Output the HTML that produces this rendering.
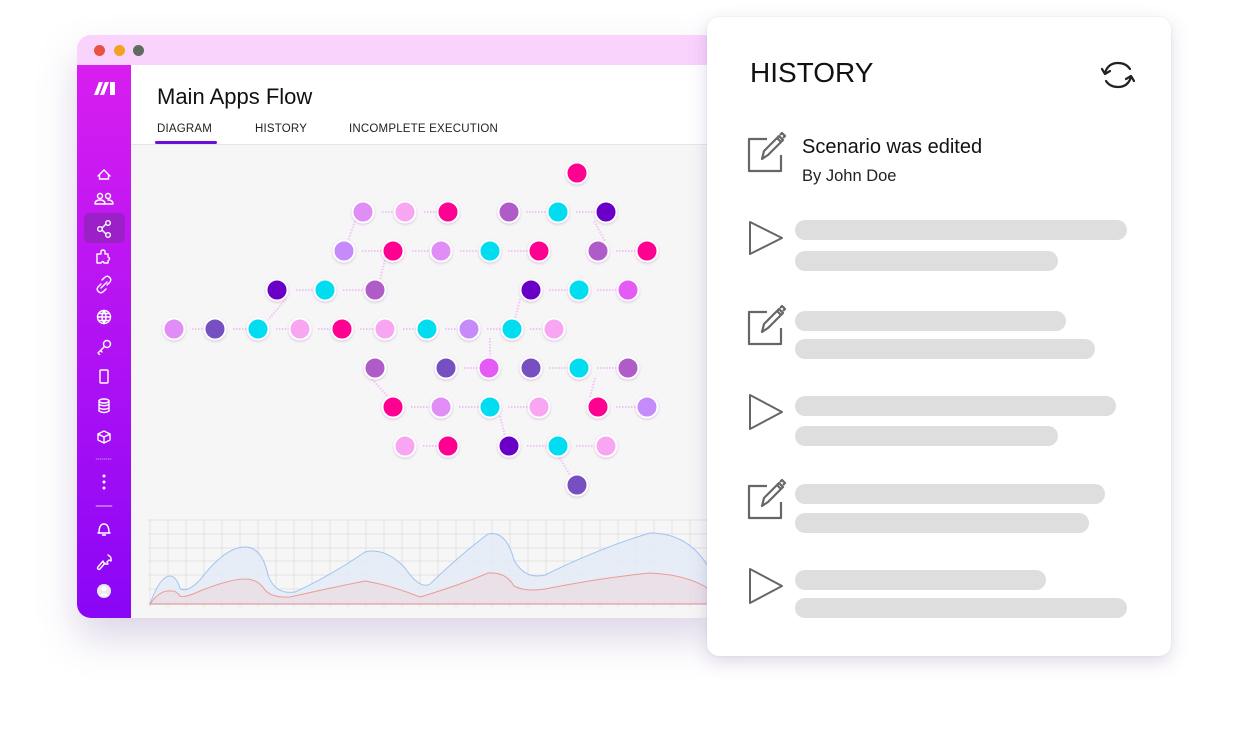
<!DOCTYPE html>
<html><head><meta charset="utf-8"><style>
*{margin:0;padding:0;box-sizing:border-box}
body{width:1250px;height:741px;background:#fff;position:relative;overflow:hidden;font-family:"Liberation Sans",sans-serif}
.win{position:absolute;left:77px;top:35px;width:640px;height:583px;border-radius:14px;overflow:hidden;background:#f6f6f6;box-shadow:0 20px 40px rgba(120,90,160,.25)}
.tb{position:absolute;left:0;top:0;width:100%;height:30px;background:#f9d3fb}
.dot{position:absolute;top:10px;width:11px;height:11px;border-radius:50%}
.side{position:absolute;left:0;top:30px;width:54px;height:553px;background:linear-gradient(#d81ef0,#8a06f6)}
.hdr{position:absolute;left:54px;top:30px;right:0;height:80px;background:#fff;border-bottom:1px solid #e6e6e6}
.panel{position:absolute;left:707px;top:17px;width:464px;height:639px;background:#fff;border-radius:12px;box-shadow:0 6px 18px rgba(110,80,150,.22),0 0 2px rgba(0,0,0,.08)}
.bar{position:absolute;left:88px;height:20px;border-radius:10px;background:#dedede}
</style></head><body>
<div class="win">
 <div class="tb"><div class="dot" style="left:17px;background:#e9523f"></div><div class="dot" style="left:37px;background:#f3a11f"></div><div class="dot" style="left:56px;background:#5f6a60"></div></div>
 <div class="side">
  <svg width="54" height="553" viewBox="0 0 54 553" fill="none" stroke="#fff" stroke-width="1.4" stroke-linecap="round" stroke-linejoin="round">
   <g fill="#fff" stroke="none"><polygon points="17,30 22,17 26,17 21,30"/><polygon points="23,30 28,17 32,17 27,30"/><polygon points="33,17 38,17 38,30 33,30"/></g>
   <path d="M21,111 L27,105 L33,111 M22.5,110 V114 H31.5 V110"/>
   <circle cx="23" cy="131" r="2.5"/><circle cx="31" cy="131" r="2.5"/><path d="M18,139 Q18,135 23,135 Q28,135 28,139 Z M29,139 H36 Q36,135 31,135"/>
   <rect x="7" y="148" width="41" height="30" rx="5" fill="#9b20c8" stroke="none"/>
   <circle cx="31" cy="158" r="2.3"/><circle cx="23" cy="164" r="2.3"/><circle cx="31" cy="170" r="2.3"/><path d="M25,163 L29,159 M25,165 L29,169"/>
   <path d="M20,196 V189 H24 V186 Q26,184 28,186 V189 H31 V192 Q34,193 31,196 V198 H27 Q26,195 24,198 H20 Z"/>
   <path d="M24,219 L21,222 Q19,225 22,227 Q24,229 27,226 L29,224 M30,220 L33,217 Q35,214 32,212 Q30,210 27,213 L25,215 M24,223 L30,217"/>
   <circle cx="27" cy="252" r="6.5"/><path d="M20.5,252 H33.5 M27,245.5 Q23,252 27,258.5 Q31,252 27,245.5 M21.5,248.5 H32.5 M21.5,255.5 H32.5"/>
   <circle cx="30" cy="279" r="3.5"/><path d="M27.5,281.5 L21,288 L22.5,289.5 M23.5,285.5 L25,287"/>
   <rect x="23" y="305" width="8" height="13" rx="1"/>
   <ellipse cx="27" cy="336" rx="5" ry="2"/><path d="M22,336 V346 Q27,349 32,346 V336 M22,339.5 Q27,342 32,339.5 M22,343 Q27,345.5 32,343"/>
   <path d="M27,366 L33,369 V375 L27,378 L21,375 V369 Z M21,369 L27,372 L33,369 M27,372 V378"/>
   <path d="M19,394 H35" stroke-dasharray="1 1" stroke-width=".6"/>
   <g fill="#fff" stroke="none"><circle cx="27" cy="411" r="1.5"/><circle cx="27" cy="417" r="1.5"/><circle cx="27" cy="423" r="1.5"/></g>
   <path d="M19,441 H35" stroke-width=".7"/>
   <path d="M22,468 Q22,459 27,459 Q32,459 32,468 H33 H21 H22 M25.5,470 H28.5"/>
   <path d="M31,490 Q35,492 34,496 L32,495 L30,497 L31,499 Q27,500 26,496 L21,502 Q20,503 21,504 Q22,505 23,504 L28,498"/>
   <circle cx="27" cy="526" r="7" fill="#e8e8ee" stroke="none"/><circle cx="27" cy="524" r="2.6" fill="#fff" stroke="none"/><path d="M22,531 Q27,525 32,531" fill="#fff" stroke="none"/>
  </svg>
 </div>
 <div class="hdr">
  <div style="position:absolute;left:26px;top:19px;font-size:22px;color:#111">Main Apps Flow</div>
  <div style="position:absolute;left:26px;top:58px;font-size:11.5px;color:#222;letter-spacing:.2px">DIAGRAM</div>
  <div style="position:absolute;left:124px;top:58px;font-size:11.5px;color:#222;letter-spacing:.2px">HISTORY</div>
  <div style="position:absolute;left:218px;top:58px;font-size:11.5px;color:#222;letter-spacing:.2px">INCOMPLETE EXECUTION</div>
  <div style="position:absolute;left:24px;top:76px;width:62px;height:3px;background:#6c0fd8;border-radius:2px"></div>
 </div>
</div>
<svg style="position:absolute;left:0;top:0" width="710" height="620">
 <defs><filter id="sh"><feDropShadow dx="0" dy="1" stdDeviation="1.2" flood-color="#a060c0" flood-opacity=".35"/></filter></defs>
 <g stroke="#f2c4f6" stroke-width="2" stroke-dasharray="1.5 1.5">
  <path d="M382,212H395 M424,212H438 M526,212H548 M576,212H596 M362,251H383 M412,251H431 M460,251H480 M508,251H529 M616,251H637 M296,290H315 M343,290H365 M549,290H569 M597,290H618 M192,329H205 M233,329H248 M276,329H290 M318,329H332 M360,329H375 M403,329H417 M445,329H459 M487,329H502 M530,329H544 M464,368H479 M549,368H569 M597,368H618 M411,407H431 M459,407H480 M508,407H529 M616,407H637 M423,446H438 M527,446H548 M576,446H596 M355,221L348,241 M385,260L380,280 M286,299L268,320 M520,299L515,320 M370,377L388,397 M594,221L605,241 M490,338L490,358 M500,416L505,436 M595,378L590,397 M558,455L570,475"/>
 </g>
 <g stroke="#fff" stroke-width="2" filter="url(#sh)">
  <circle cx="577" cy="173" r="10.5" fill="#ff0091"/>
  <circle cx="363" cy="212" r="10.5" fill="#e08ef5"/><circle cx="405" cy="212" r="10.5" fill="#f9a6f2"/><circle cx="448" cy="212" r="10.5" fill="#ff0091"/><circle cx="509" cy="212" r="10.5" fill="#b05cc8"/><circle cx="558" cy="212" r="10.5" fill="#00dcf0"/><circle cx="606" cy="212" r="10.5" fill="#6a00c8"/>
  <circle cx="344" cy="251" r="10.5" fill="#c68bfa"/><circle cx="393" cy="251" r="10.5" fill="#ff0091"/><circle cx="441" cy="251" r="10.5" fill="#e08ef5"/><circle cx="490" cy="251" r="10.5" fill="#00dcf0"/><circle cx="539" cy="251" r="10.5" fill="#ff0091"/><circle cx="598" cy="251" r="10.5" fill="#b05cc8"/><circle cx="647" cy="251" r="10.5" fill="#ff0091"/>
  <circle cx="277" cy="290" r="10.5" fill="#6a00c8"/><circle cx="325" cy="290" r="10.5" fill="#00dcf0"/><circle cx="375" cy="290" r="10.5" fill="#b05cc8"/><circle cx="531" cy="290" r="10.5" fill="#6a00c8"/><circle cx="579" cy="290" r="10.5" fill="#00dcf0"/><circle cx="628" cy="290" r="10.5" fill="#e55af5"/>
  <circle cx="174" cy="329" r="10.5" fill="#e08ef5"/><circle cx="215" cy="329" r="10.5" fill="#7650c0"/><circle cx="258" cy="329" r="10.5" fill="#00dcf0"/><circle cx="300" cy="329" r="10.5" fill="#f9a6f2"/><circle cx="342" cy="329" r="10.5" fill="#ff0091"/><circle cx="385" cy="329" r="10.5" fill="#f9a6f2"/><circle cx="427" cy="329" r="10.5" fill="#00dcf0"/><circle cx="469" cy="329" r="10.5" fill="#c68bfa"/><circle cx="512" cy="329" r="10.5" fill="#00dcf0"/><circle cx="554" cy="329" r="10.5" fill="#f9a6f2"/>
  <circle cx="375" cy="368" r="10.5" fill="#b05cc8"/><circle cx="446" cy="368" r="10.5" fill="#7650c0"/><circle cx="489" cy="368" r="10.5" fill="#e55af5"/><circle cx="531" cy="368" r="10.5" fill="#7650c0"/><circle cx="579" cy="368" r="10.5" fill="#00dcf0"/><circle cx="628" cy="368" r="10.5" fill="#b05cc8"/>
  <circle cx="393" cy="407" r="10.5" fill="#ff0091"/><circle cx="441" cy="407" r="10.5" fill="#e08ef5"/><circle cx="490" cy="407" r="10.5" fill="#00dcf0"/><circle cx="539" cy="407" r="10.5" fill="#f9a6f2"/><circle cx="598" cy="407" r="10.5" fill="#ff0091"/><circle cx="647" cy="407" r="10.5" fill="#c68bfa"/>
  <circle cx="405" cy="446" r="10.5" fill="#f9a6f2"/><circle cx="448" cy="446" r="10.5" fill="#ff0091"/><circle cx="509" cy="446" r="10.5" fill="#6a00c8"/><circle cx="558" cy="446" r="10.5" fill="#00dcf0"/><circle cx="606" cy="446" r="10.5" fill="#f9a6f2"/>
  <circle cx="577" cy="485" r="10.5" fill="#7650c0"/>
 </g>
 <g stroke="#dcdcdc" stroke-width=".7">
  <path d="M148,520H710 M148,534H710 M148,548H710 M148,561H710 M148,575H710 M148,589H710 M148,603H710"/>
  <path d="M150,520V607 M168,520V607 M186,520V607 M204,520V607 M222,520V607 M240,520V607 M258,520V607 M276,520V607 M294,520V607 M312,520V607 M330,520V607 M348,520V607 M366,520V607 M384,520V607 M402,520V607 M420,520V607 M438,520V607 M456,520V607 M474,520V607 M492,520V607 M510,520V607 M528,520V607 M546,520V607 M564,520V607 M582,520V607 M600,520V607 M618,520V607 M636,520V607 M654,520V607 M672,520V607 M690,520V607 M708,520V607"/>
 </g>
 <path d="M150,604 Q160,576 170,576 Q176,576 180,588 Q186,594 200,580 Q225,547 245,547 Q262,547 268,575 Q275,595 295,592 Q330,576 365,552 Q385,547 405,568 Q420,590 430,584 Q460,555 488,534 Q506,530 514,560 Q525,580 545,575 Q600,548 650,533 Q690,533 710,570 V604 Z" fill="#e4ecf8" opacity=".8" stroke="#8ab8f0" stroke-width="1"/>
 <path d="M150,604 Q160,590 170,591 Q176,590 180,596 Q185,598 200,591 Q230,579 245,579 Q258,579 265,590 Q272,598 290,597 Q330,588 365,581 Q390,585 420,597 Q460,585 488,573 Q506,572 514,586 Q525,592 545,589 Q600,578 650,573 Q690,575 710,590 V604 Z" fill="#ecdbe2" opacity=".7" stroke="#f07a6a" stroke-width="1"/>
</svg>
<div class="panel">
 <div style="position:absolute;left:43px;top:40px;font-size:28px;color:#111">HISTORY</div>
 <svg style="position:absolute;left:393px;top:41px" width="36" height="34" viewBox="0 0 36 34" fill="none" stroke="#222" stroke-width="2.2" stroke-linecap="round" stroke-linejoin="round">
  <path d="M5,15 Q8,5 18,5 Q26,5 30,11 M31,19 Q28,29 18,29 Q10,29 6,23"/><path d="M2,11 L5,16 L10,13 M34,23 L31,18 L26,21"/>
 </svg>
 <svg style="position:absolute;left:40px;top:113px" width="42" height="260" viewBox="0 0 42 260" fill="none" stroke="#666" stroke-width="2.2" stroke-linejoin="round">
  <path d="M20,9 H2 V41 H34 V25"/><path d="M15,29 L17,21 L32,6 L36,10 L21,25 Z M30,8 L34,12 M33,5 L35,3 L38,6 L36,8"/>
  <path d="M3,92 L35,108 L3,124 Z" stroke-width="2"/>
 </svg>
 <svg style="position:absolute;left:40px;top:286px" width="42" height="330" viewBox="0 0 42 330" fill="none" stroke="#666" stroke-width="2.2" stroke-linejoin="round">
  <path d="M20,9 H2 V41 H34 V25"/><path d="M15,29 L17,21 L32,6 L36,10 L21,25 Z M30,8 L34,12 M33,5 L35,3 L38,6 L36,8"/>
  <path d="M3,92 L35,109 L3,126 Z" stroke-width="2"/>
  <g transform="translate(0,174)"><path d="M20,9 H2 V41 H34 V25"/><path d="M15,29 L17,21 L32,6 L36,10 L21,25 Z M30,8 L34,12 M33,5 L35,3 L38,6 L36,8"/></g>
  <path d="M3,266 L35,283 L3,300 Z" stroke-width="2"/>
 </svg>
 <div style="position:absolute;left:95px;top:119px;font-size:20px;color:#111">Scenario was edited</div>
 <div style="position:absolute;left:95px;top:150px;font-size:16.5px;color:#222">By John Doe</div>
 <div class="bar" style="top:203px;width:332px"></div><div class="bar" style="top:234px;width:263px"></div>
 <div class="bar" style="top:294px;width:271px"></div><div class="bar" style="top:322px;width:300px"></div>
 <div class="bar" style="top:379px;width:321px"></div><div class="bar" style="top:409px;width:263px"></div>
 <div class="bar" style="top:467px;width:310px"></div><div class="bar" style="top:496px;width:294px"></div>
 <div class="bar" style="top:553px;width:251px"></div><div class="bar" style="top:581px;width:332px"></div>
</div>
</body></html>
